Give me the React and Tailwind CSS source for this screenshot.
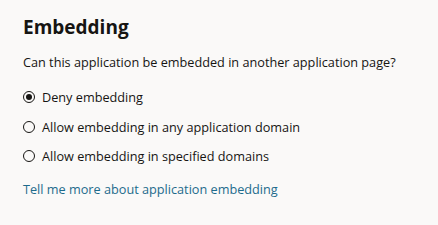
import React from "react";

const options = [
  { id: "deny", label: "Deny embedding" },
  { id: "any", label: "Allow embedding in any application domain" },
  { id: "specified", label: "Allow embedding in specified domains" },
];

function Radio({ checked }) {
  return (
    <span className="w-[12px] h-[12px] rounded-full border border-[#161513] flex items-center justify-center flex-shrink-0">
      {checked && <span className="w-[6px] h-[6px] rounded-full bg-[#161513]" />}
    </span>
  );
}

export default function App() {
  const selected = "deny";
  return (
    <div className="w-[438px] h-[225px] bg-[#faf9f8] text-[#161513] font-['Open_Sans',sans-serif] pl-[23px] pt-[14px]">
      <h2 className="text-[19px] font-bold leading-[26px]">Embedding</h2>
      <p className="text-[12.7px] leading-[18px] mt-[13px]">
        Can this application be embedded in another application page?
      </p>
      <div className="mt-[17px] flex flex-col gap-[11.5px]">
        {options.map((opt) => (
          <label key={opt.id} className="flex items-center gap-[7px] text-[12.7px] leading-[18px]">
            <Radio checked={opt.id === selected} />
            <span>{opt.label}</span>
          </label>
        ))}
      </div>
      <a className="block mt-[15px] text-[12.7px] leading-[18px] text-[#1d6b8c]">
        Tell me more about application embedding
      </a>
    </div>
  );
}
